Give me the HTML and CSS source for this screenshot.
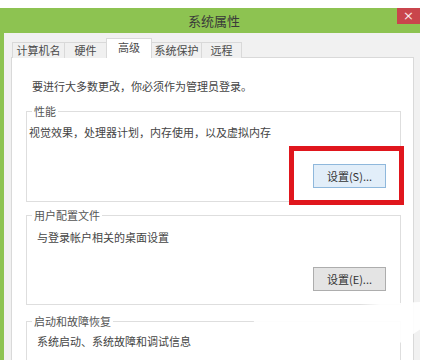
FILE: index.html
```html
<!DOCTYPE html>
<html lang="zh-CN">
<head>
    <meta charset="UTF-8">
    <meta name="viewport" content="width=device-width, initial-scale=1.0">
    <title>系统属性</title>
    <link rel="stylesheet" href="styles.css">
</head>
<body>
    <div class="screen">
        <div class="window">
            <div class="titlebar">
                <span class="title">系统属性</span>
                <span class="close">×</span>
            </div>
            <div class="frame">
                <div class="tabs">
                    <div class="tab">计算机名</div>
                    <div class="tab">硬件</div>
                    <div class="tab active">高级</div>
                    <div class="tab">系统保护</div>
                    <div class="tab">远程</div>
                </div>
                <div class="panel">
                    <p class="note">要进行大多数更改，你必须作为管理员登录。</p>

                    <fieldset class="group perf">
                        <legend>性能</legend>
                        <p class="desc">视觉效果，处理器计划，内存使用，以及虚拟内存</p>
                        <div class="actions">
                            <span class="mark"><button class="btn focused">设置(S)...</button></span>
                        </div>
                    </fieldset>

                    <fieldset class="group profile">
                        <legend>用户配置文件</legend>
                        <p class="desc">与登录帐户相关的桌面设置</p>
                        <div class="actions">
                            <button class="btn">设置(E)...</button>
                        </div>
                    </fieldset>

                    <fieldset class="group startup">
                        <legend>启动和故障恢复</legend>
                        <p class="desc">系统启动、系统故障和调试信息</p>
                    </fieldset>
                </div>
            </div>
        </div>
        <div class="smudge"></div>
    </div>
</body>
</html>
```

FILE: styles.css
```css
body {
    margin: 0;
    background-color: #ffffff;
    font-family: "Noto Sans CJK SC", "Noto Sans", sans-serif;
    color: #444;
}
.screen {
    position: relative;
    width: 427px;
    height: 360px;
    overflow: hidden;
}
.window {
    margin-top: 8px;
    width: 420px;
    background-color: #8dc351;
}
.titlebar {
    position: relative;
    height: 25px;
    display: flex;
    align-items: center;
    justify-content: center;
    padding-left: 8px;
    box-sizing: border-box;
}
.title {
    font-size: 13px;
    color: #3a3a3a;
}
.close {
    position: absolute;
    top: 0;
    right: 0;
    width: 23px;
    height: 16px;
    background-color: #c9454c;
    color: #fbe9ea;
    font-family: "DejaVu Sans", sans-serif;
    font-size: 13px;
    line-height: 16px;
    text-align: center;
}
.frame {
    margin-left: 4px;
    background-color: #f1f1f1;
    padding: 6px 6px 0 7px;
    height: 340px;
    box-sizing: border-box;
}
.tabs {
    display: flex;
    align-items: flex-end;
    height: 19px;
    padding-left: 1px;
    margin-bottom: -1px;
    position: relative;
    z-index: 1;
}
.tab {
    box-sizing: border-box;
    height: 16px;
    border: 1px solid #d9d9d9;
    border-bottom: none;
    margin-right: -1px;
    background-color: #f0f0f0;
    font-size: 11px;
    line-height: 15px;
    text-align: center;
    color: #4a4a4a;
}
.tab:nth-child(1) { width: 53px; }
.tab:nth-child(2) { width: 43px; }
.tab:nth-child(3) { width: 46px; }
.tab:nth-child(4) { width: 51px; }
.tab:nth-child(5) { width: 41px; }
.tab.active {
    height: 20px;
    background-color: #ffffff;
    line-height: 17px;
}
.panel {
    background-color: #ffffff;
    border: 1px solid #d9d9d9;
    padding: 21px 12px 0 14px;
    height: 320px;
}
.note {
    margin: 0 0 11px 6px;
    font-size: 11px;
    line-height: 14px;
}
.group {
    margin: 0;
    padding: 0 14px 13px 0;
    border: 1px solid #dedede;
    min-width: 0;
}
.group legend {
    margin-left: 5px;
    padding: 0 2px;
    font-size: 11px;
    line-height: 14px;
    color: #555;
}
.desc {
    margin: 0;
    font-size: 11px;
    line-height: 14px;
}
.perf .desc {
    padding: 7px 0 0 2px;
}
.profile {
    margin-top: 6px;
}
.profile .desc {
    padding: 8px 0 0 10px;
}
.startup {
    margin-top: 9px;
}
.startup .desc {
    padding: 6px 0 0 10px;
}
.actions {
    display: flex;
    justify-content: flex-end;
}
.perf .actions {
    margin-top: 25px;
}
.profile .actions {
    margin-top: 23px;
}
.btn {
    width: 73px;
    height: 24px;
    padding: 0;
    font-family: "Noto Sans CJK SC", "Noto Sans", sans-serif;
    font-size: 11px;
    color: #333;
    border: 1px solid #adadad;
    background-color: #e4e4e4;
    border-radius: 0;
}
.btn.focused {
    border-color: #8fb8dc;
    background-color: #e2eef9;
}
.mark {
    position: relative;
    display: inline-block;
    line-height: 0;
}
.mark::after {
    content: "";
    position: absolute;
    top: -18px;
    right: -18px;
    bottom: -17px;
    left: -24px;
    border: 5px solid #e0161d;
}
.smudge {
    position: absolute;
    left: 252px;
    top: 302px;
    width: 168px;
    height: 50px;
    background-color: rgba(255, 255, 255, 0.92);
    clip-path: polygon(0 30%, 40% 10%, 100% 0, 100% 55%, 80% 100%, 20% 90%, 5% 70%);
}
```
